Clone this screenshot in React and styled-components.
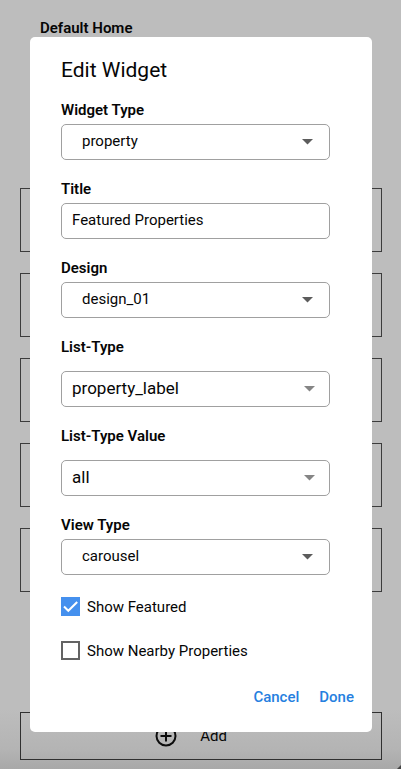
import React, { useState } from 'react';
import styled, { createGlobalStyle } from 'styled-components';

const GlobalStyle = createGlobalStyle`
  *, *::before, *::after { box-sizing: border-box; }
  body {
    margin: 0;
    background: #bdbdbd;
    color: #060606;
    font-family: Roboto, "Liberation Sans", sans-serif;
    font-size: 15px;
    line-height: 18px;
  }
  button, input, select { font: inherit; color: inherit; margin: 0; }
`;

const Screen = styled.div`
  position: relative;
  min-height: 100vh;
  padding: 19px 19px 9px 20px;
  display: flex;
  flex-direction: column;
  background: linear-gradient(to top, #a8a8a8 0, #b4b4b4 20px, #bdbdbd 60px);
`;

const PageTitle = styled.h1`
  margin: 0 20px 151px;
  font-size: 15px;
  line-height: 18px;
  font-weight: 600;
`;

const WidgetList = styled.ul`
  list-style: none;
  margin: 0;
  padding: 0;
  display: grid;
  gap: 21px;
`;

const WidgetSlot = styled.li`
  height: 64px;
  border: 1px solid #3c3c3c;
`;

const AddButton = styled.button`
  display: flex;
  align-items: center;
  justify-content: center;
  gap: 23px;
  height: 48px;
  margin-top: 120px;
  padding: 0 20px 0 0;
  border: 1px solid #303030;
  border-radius: 0;
  background: none;
`;

const ResizeCorner = styled.svg`
  position: absolute;
  right: 0;
  bottom: 0;
`;

const Dialog = styled.form`
  position: absolute;
  top: 37px;
  left: 30px;
  right: 29px;
  padding: 20px 18px 26px 31px;
  border-radius: 5px;
  background: #fff;
`;

const Fields = styled.div`
  display: grid;
  gap: 20px;
  margin-right: 24px;
`;

const DialogTitle = styled.h2`
  margin: 0 0 18px;
  font-size: 21px;
  line-height: 26px;
  font-weight: 400;
`;

const Field = styled.div`
  display: grid;
  gap: ${({ $spaced }) => ($spaced ? 15 : 5)}px;
`;

const Label = styled.label`
  font-weight: 600;
`;

const Control = styled.div`
  display: grid;
  align-items: center;
  > * { grid-area: 1 / 1; }
`;

const Select = styled.select`
  appearance: none;
  width: 100%;
  height: 36px;
  padding: 0 40px 3px ${({ $large }) => ($large ? 10 : 20)}px;
  border: 1px solid #a0a0a0;
  border-radius: 5px;
  background: #fff;
  font-size: ${({ $large }) => ($large ? 17 : 15)}px;
`;

const TextInput = styled.input`
  width: 100%;
  height: 36px;
  padding: 0 10px 2px;
  border: 1px solid #a0a0a0;
  border-radius: 5px;
  background: #fff;
`;

const Arrow = styled.svg`
  justify-self: end;
  margin-right: ${({ $large }) => ($large ? 15 : 17)}px;
  fill: ${({ $large }) => ($large ? '#858585' : '#5c5c5c')};
  pointer-events: none;
`;

const Checks = styled.div`
  display: grid;
  gap: 25px;
  margin-top: 22px;
`;

const CheckRow = styled.label`
  display: flex;
  align-items: center;
  gap: 7px;
`;

const CheckMark = styled.span`
  display: grid;
  > * { grid-area: 1 / 1; }
`;

const CheckBox = styled.input`
  appearance: none;
  width: 19px;
  height: 19px;
  border: 2px solid #636363;
  &:checked { border-color: #4590ee; background: #4590ee; }
`;

const Tick = styled.svg`
  pointer-events: none;
`;

const Actions = styled.div`
  display: flex;
  justify-content: flex-end;
  gap: 20px;
  margin-top: 28px;
`;

const TextButton = styled.button`
  padding: 0;
  border: 0;
  background: none;
  color: #267fdf;
  font-weight: 500;
`;

function SelectField({ id, label, options, large, spaced }) {
  return (
    <Field $spaced={spaced}>
      <Label htmlFor={id}>{label}</Label>
      <Control>
        <Select id={id} $large={large}>
          {options.map((option) => <option key={option}>{option}</option>)}
        </Select>
        <Arrow $large={large} width="11" height="6" viewBox="0 0 11 6" aria-hidden="true">
          <path d="M0 0h11L5.5 5.5z" />
        </Arrow>
      </Control>
    </Field>
  );
}

function CheckField({ label, initial }) {
  const [checked, setChecked] = useState(initial);
  return (
    <CheckRow>
      <CheckMark>
        <CheckBox type="checkbox" checked={checked} onChange={(e) => setChecked(e.target.checked)} />
        {checked && (
          <Tick width="19" height="19" viewBox="0 0 19 19" fill="none" stroke="#fff" strokeWidth="2" aria-hidden="true">
            <path d="M3 9.5l4.3 4.3L16.2 5" />
          </Tick>
        )}
      </CheckMark>
      {label}
    </CheckRow>
  );
}

export default function App() {
  return (
    <>
      <GlobalStyle />
      <Screen>
        <PageTitle>Default Home</PageTitle>
        <WidgetList>
          {[1, 2, 3, 4, 5].map((n) => <WidgetSlot key={n} />)}
        </WidgetList>
        <AddButton type="button">
          <svg width="22" height="22" viewBox="0 0 22 22" fill="none" stroke="#0c0c0c" strokeWidth="2" aria-hidden="true">
            <circle cx="11" cy="11" r="9.5" />
            <path d="M11 5.5v11M5.5 11h11" />
          </svg>
          Add
        </AddButton>
        <ResizeCorner width="4" height="4" viewBox="0 0 4 4" aria-hidden="true">
          <path d="M4 0v4H0z" fill="#444" />
        </ResizeCorner>
        <Dialog role="dialog" aria-labelledby="dialog-title" onSubmit={(e) => e.preventDefault()}>
          <DialogTitle id="dialog-title">Edit Widget</DialogTitle>
          <Fields>
            <SelectField id="widget-type" label="Widget Type" options={['property']} />
            <Field>
              <Label htmlFor="title">Title</Label>
              <TextInput id="title" type="text" defaultValue="Featured Properties" />
            </Field>
            <SelectField id="design" label="Design" options={['design_01']} />
            <SelectField id="list-type" label="List-Type" options={['property_label']} large spaced />
            <SelectField id="list-type-value" label="List-Type Value" options={['all']} large spaced />
            <SelectField id="view-type" label="View Type" options={['carousel']} />
          </Fields>
          <Checks>
            <CheckField label="Show Featured" initial />
            <CheckField label="Show Nearby Properties" initial={false} />
          </Checks>
          <Actions>
            <TextButton type="button">Cancel</TextButton>
            <TextButton type="submit">Done</TextButton>
          </Actions>
        </Dialog>
      </Screen>
    </>
  );
}
